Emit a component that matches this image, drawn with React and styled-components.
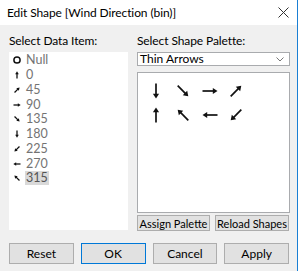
import React from "react";
import styled, { createGlobalStyle } from "styled-components";

const Global = createGlobalStyle`
  html, body { margin: 0; padding: 0; background: #ffffff; }
  body { font-family: Lato, "Noto Sans", sans-serif; }
  * { box-sizing: border-box; }
`;

const Window = styled.div`
  width: 298px;
  height: 271px;
  background: #f0f0f0;
  border-right: 1px solid #1a7fd4;
  display: flex;
  flex-direction: column;
  font-size: 12px;
  color: #000;
`;

const TitleBar = styled.div`
  height: 25px;
  background: #ffffff;
  display: flex;
  align-items: center;
  justify-content: space-between;
  padding: 0 8px 0 7px;
`;

const Title = styled.span`
  font-size: 12px;
  white-space: nowrap;
  letter-spacing: -0.1px;
`;

const Body = styled.div`
  display: grid;
  grid-template-columns: 119px 153px;
  column-gap: 9px;
  padding: 9px 7px 0 9px;
`;

const Column = styled.div`
  display: flex;
  flex-direction: column;
`;

const Label = styled.div`
  height: 14px;
  line-height: 14px;
  margin-bottom: 4px;
  white-space: nowrap;
  letter-spacing: -0.1px;
`;

const ListBox = styled.div`
  height: 178px;
  background: #ffffff;
  padding: 1px 0 0 4px;
`;

const Item = styled.div`
  height: 14.75px;
  line-height: 14px;
  display: flex;
  align-items: center;
  color: #737373;
  font-size: 12.5px;
`;

const IconSlot = styled.span`
  width: 8px;
  height: 8px;
  display: flex;
  align-items: center;
  justify-content: center;
  margin-right: 4px;
`;

const ItemText = styled.span`
  padding: 0 1px;
  line-height: 14px;
  background: ${(p) => (p.$selected ? "#d9d9d9" : "transparent")};
  color: ${(p) => (p.$selected ? "#555" : "#737373")};
`;

const Select = styled.div`
  height: 14px;
  background: #ffffff;
  border: 1px solid #a9abae;
  display: flex;
  align-items: center;
  justify-content: space-between;
  padding: 0 5px 0 2px;
  line-height: 12px;
`;

const Palette = styled.div`
  margin-top: 6px;
  height: 141px;
  background: #ffffff;
  border: 1px solid #a9abae;
  display: grid;
  grid-template-columns: repeat(4, 26.7px);
  grid-auto-rows: 24px;
  align-content: start;
  padding: 6px 0 0 5px;
`;

const Cell = styled.div`
  display: flex;
  align-items: center;
  justify-content: center;
`;

const SmallRow = styled.div`
  margin-top: 2px;
  display: grid;
  grid-template-columns: 73px 74px;
  column-gap: 5px;
`;

const Button = styled.button`
  font-family: inherit;
  font-size: ${(p) => (p.$small ? "11px" : "12px")};
  color: #000;
  background: #e1e1e1;
  border: 1px solid ${(p) => (p.$primary ? "#0078d7" : "#adadad")};
  height: ${(p) => (p.$small ? "16px" : "21px")};
  padding: 0;
  line-height: 1;
  white-space: nowrap;
`;

const Footer = styled.div`
  display: grid;
  grid-template-columns: repeat(4, 1fr);
  column-gap: 7px;
  padding: 12px 8px 0 9px;
`;

const SmallArrow = ({ deg }) => (
  <svg width="8" height="8" viewBox="0 0 8 8">
    <g transform={`rotate(${deg} 4 4)`}>
      <line x1="4" y1="7.5" x2="4" y2="2" stroke="#111" strokeWidth="1.3" />
      <polygon points="4,0.3 2.2,3.2 5.8,3.2" fill="#111" />
    </g>
  </svg>
);

const BigArrow = ({ deg }) => (
  <svg width="18" height="18" viewBox="0 0 18 18">
    <g transform={`rotate(${deg} 9 9)`}>
      <line x1="9" y1="16.5" x2="9" y2="4" stroke="#111" strokeWidth="1.7" />
      <polygon points="9,1.5 5.9,6.2 12.1,6.2" fill="#111" />
    </g>
  </svg>
);

const NullIcon = () => (
  <svg width="8" height="8" viewBox="0 0 8 8">
    <circle cx="4" cy="4" r="3.1" fill="none" stroke="#111" strokeWidth="1.5" />
  </svg>
);

const Chevron = () => (
  <svg width="8" height="5" viewBox="0 0 8 5">
    <polyline points="0.5,0.5 4,4 7.5,0.5" fill="none" stroke="#777" strokeWidth="1" />
  </svg>
);

const CloseX = () => (
  <svg width="11" height="11" viewBox="0 0 11 11">
    <line x1="0.5" y1="0.5" x2="10.5" y2="10.5" stroke="#333" strokeWidth="1" />
    <line x1="10.5" y1="0.5" x2="0.5" y2="10.5" stroke="#333" strokeWidth="1" />
  </svg>
);

const items = [
  { label: "Null", deg: null },
  { label: "0", deg: 0 },
  { label: "45", deg: 45 },
  { label: "90", deg: 90 },
  { label: "135", deg: 135 },
  { label: "180", deg: 180 },
  { label: "225", deg: 225 },
  { label: "270", deg: 270 },
  { label: "315", deg: 315, selected: true },
];

const palette = [180, 135, 90, 45, 0, 315, 270, 225];

export default function App() {
  return (
    <>
      <Global />
      <Window>
        <TitleBar>
          <Title>Edit Shape [Wind Direction (bin)]</Title>
          <CloseX />
        </TitleBar>
        <Body>
          <Column>
            <Label>Select Data Item:</Label>
            <ListBox>
              {items.map((it) => (
                <Item key={it.label}>
                  <IconSlot>{it.deg === null ? <NullIcon /> : <SmallArrow deg={it.deg} />}</IconSlot>
                  <ItemText $selected={it.selected}>{it.label}</ItemText>
                </Item>
              ))}
            </ListBox>
          </Column>
          <Column>
            <Label>Select Shape Palette:</Label>
            <Select>
              <span>Thin Arrows</span>
              <Chevron />
            </Select>
            <Palette>
              {palette.map((d, i) => (
                <Cell key={i}>
                  <BigArrow deg={d} />
                </Cell>
              ))}
            </Palette>
            <SmallRow>
              <Button $small>Assign Palette</Button>
              <Button $small>Reload Shapes</Button>
            </SmallRow>
          </Column>
        </Body>
        <Footer>
          <Button>Reset</Button>
          <Button $primary>OK</Button>
          <Button>Cancel</Button>
          <Button>Apply</Button>
        </Footer>
      </Window>
    </>
  );
}
